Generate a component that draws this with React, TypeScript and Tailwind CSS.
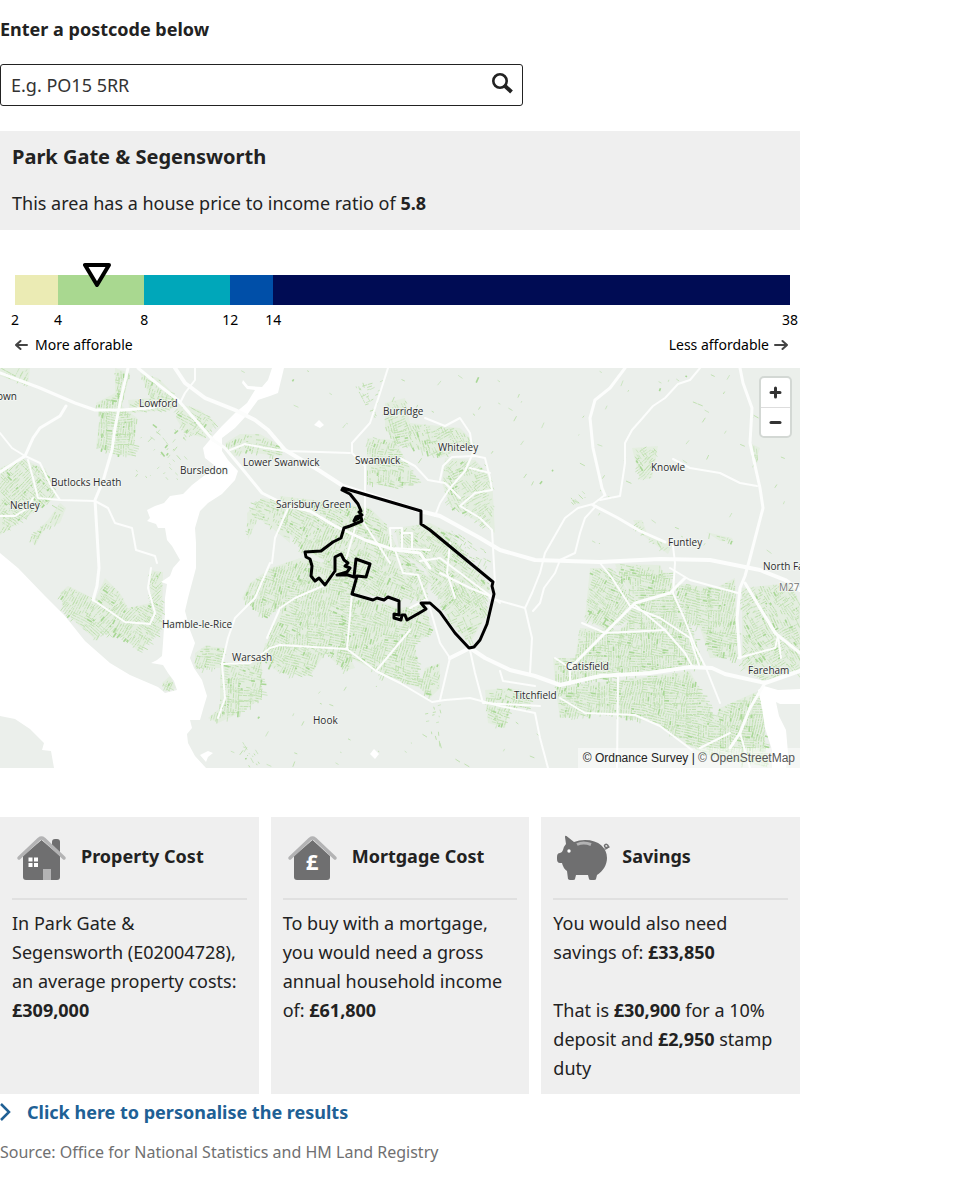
import type { ReactNode } from "react";

type Point = [number, number];

const bands = [
  { from: 2, className: "bg-[#ebebb4] grow-2" },
  { from: 4, className: "bg-[#a9d890] grow-4" },
  { from: 8, className: "bg-[#00a7ba] grow-4" },
  { from: 12, className: "bg-[#004fa8] grow-2" },
  { from: 14, className: "bg-[#000c54] grow-24" },
];
const tickGrow = ["grow-2", "grow-4", "grow-4", "grow-2", "grow-24"];
const SCALE_MIN = 2;
const SCALE_MAX = 38;

const water = [
  "M272 0 268 12 262 19 248 18 243 12 242 15 247 21 255 22 247 35 235 45 222 58 213 68 203 80 205 90 214 97 205 107 192 117 183 126 170 128 164 135 155 138 147 142 150 150 147 153 156 156 158 160 165 160 167 172 172 178 180 192 173 200 170 208 161 214 167 216 165 230 165 245 163 275 162 288 157 292 151 295 163 297 168 305 174 313 177 322 165 325 158 319 130 307 110 295 85 273 65 248 45 228 18 200 0 185 0 348 15 351 30 361 44 375 42 382 51 383 54 400 206 400 195 388 188 375 187 366 192 360 190 352 200 352 204 338 207 328 202 312 194 300 190 290 195 275 190 262 185 243 188 230 192 215 196 200 196 175 195 160 200 143 208 135 222 126 235 112 238 103 228 92 222 83 222 70 235 60 247 47 258 32 270 28 278 25 284 0Z",
  "M758 322 764 318 778 322 800 321 800 336 780 336 776 334 779 348 786 362 788 385 786 400 772 400 772 382 765 360 762 340Z",
  "M314 57 319 52 324 57 320 60Z",
  "M370 386 374 381 379 386 375 391Z",
  "M200 387 208 383 213 385 208 389 206 394Z",
];

const minorRoads = [
  "M0 65 12 80 25 88 40 95 52 120 60 132",
  "M28 92 33 110 38 130 60 132 95 133 108 140 115 155 132 160 136 182 155 188 157 195",
  "M151 200 148 220 155 245 150 256 125 254 105 240 93 232",
  "M0 148 15 148 28 140 33 130",
  "M195 0 195 12 185 25 180 35",
  "M230 82 245 76 265 80 285 83 320 84 350 85",
  "M388 0 380 25 370 55 352 75 352 85 365 98 365 145 362 152",
  "M400 90 415 98 428 112 445 115 460 130",
  "M425 50 445 58 460 50 470 65 473 85 465 103 450 120 440 135 435 148",
  "M440 112 443 98 452 89 475 88 485 90 490 110 492 122 475 125 460 138 480 150 492 162 495 215",
  "M470 100 490 105",
  "M700 0 690 12 678 16 665 30 653 38 640 53 632 62 625 75 625 95 620 128 600 132",
  "M596 138 585 150 580 165 575 185 560 192 555 205 544 220 540 235 533 243",
  "M673 91 690 100 720 105 740 115 757 118",
  "M605 127 593 136 578 140 565 150 545 185 540 205 532 225 525 240 532 270 530 305",
  "M267 270 280 240 295 230 325 217 335 205",
  "M222 296 250 295 270 280 280 277 347 281 376 303 400 315 432 334 445 332 470 330 500 338 535 345 540 370 548 400",
  "M352 225 347 281",
  "M376 303 410 262",
  "M390 160 391 180M390 160 402 160 402 180M402 165 412 165 412 180M391 180 430 182",
  "M395 182 403 205 418 207 430 240 440 275 450 290 440 332",
  "M410 240 425 232",
  "M470 282 475 305 483 335 540 338",
  "M500 303 503 313 535 318",
  "M490 230 525 240",
  "M420 193 440 190 500 235",
  "M440 205 470 220 490 228",
  "M600 195 612 210 630 238 660 250 690 270 700 300",
  "M673 225 684 250 695 278 706 300 720 335",
  "M582 255 605 265 665 262",
  "M635 237 665 262 685 285 692 298",
  "M560 330 585 345 635 347 660 358 692 382",
  "M618 308 617 400",
  "M555 290 570 300 570 316",
  "M670 200 690 212 738 225",
  "M745 215 760 240 778 268 781 290",
  "M738 290 775 280 778 268",
  "M673 178 675 195 673 225",
  "M740 365 750 400M700 380 730 365",
  "M270 195 255 230 235 250 228 270 222 296",
  "M222 296 225 330 218 350",
  "M288 140 275 170 272 195",
  "M355 160 345 195M362 152 390 195",
  "M450 175 447 205 455 230",
];

const majorRoads = [
  "M0 5 40 20 75 35 95 42 122 42 150 40 170 34",
  "M128 0 121 30 115 60 112 82 103 113 95 132 97 165 99 200 97 218 93 232",
  "M0 104 25 88 33 70 40 60 60 48 66 38",
  "M138 0 160 18 178 32 213 72",
  "M213 72 225 80 240 98 262 125 288 138 310 143 335 158 350 165 365 172 395 182 420 185 430 200",
  "M625 0 610 20 595 32 590 50 593 80 602 120 605 127",
  "M593 137 618 150 640 163 665 174",
  "M740 0 743 15 752 40 750 75 760 120 763 140 750 190 745 208 740 220 737 250 740 290",
  "M570 300 600 270 635 235 670 225 685 210",
  "M745 215 760 240 775 265 800 285",
  "M765 315 750 340 740 365 730 380",
];

const trunkRoads = [
  "M175 0 185 15 205 30 235 42 255 52 268 62 285 82 320 103 343 118 420 143 440 148 480 170 500 182 535 192 600 194 660 191 710 192 740 198 760 202 785 212 800 222",
  "M450 290 470 280 485 290 510 302 535 308 560 317 600 308 650 305 690 299 712 300 725 306 765 315 800 303",
];

const towns: { angle: number; density: number; shape: Point[] }[] = [
  { angle: 20, density: 0.75, shape: [[0, 0], [30, 0], [28, 18], [0, 8]] },
  { angle: 5, density: 1, shape: [[115, 0], [130, 5], [122, 38], [137, 50], [133, 88], [112, 86], [96, 78], [100, 50], [96, 35], [115, 25]] },
  { angle: 20, density: 0.8, shape: [[140, 5], [158, 10], [178, 30], [170, 42], [130, 45], [128, 32], [150, 30]] },
  { angle: 35, density: 0.7, shape: [[178, 35], [200, 42], [216, 55], [205, 70], [185, 65], [176, 50]] },
  { angle: 45, density: 0.1, shape: [[135, 55], [175, 50], [195, 80], [175, 115], [135, 110]] },
  { angle: 40, density: 0.85, shape: [[0, 100], [22, 90], [36, 97], [45, 100], [58, 128], [40, 140], [25, 150], [0, 167]] },
  { angle: 110, density: 0.6, shape: [[60, 135], [66, 140], [60, 155], [45, 160], [35, 178], [30, 170], [48, 152]] },
  { angle: 35, density: 0.9, shape: [[60, 225], [68, 218], [85, 226], [95, 232], [105, 210], [120, 225], [128, 240], [150, 235], [150, 202], [163, 204], [162, 260], [148, 275], [138, 283], [125, 270], [100, 265], [97, 273], [65, 245]] },
  { angle: 30, density: 0.8, shape: [[162, 315], [170, 308], [176, 320], [165, 323]] },
  { angle: 15, density: 0.6, shape: [[225, 75], [240, 66], [260, 66], [285, 80], [280, 88], [245, 84], [232, 90]] },
  { angle: 110, density: 0.6, shape: [[247, 145], [262, 130], [290, 135], [290, 175], [272, 160], [258, 150], [248, 172]] },
  { angle: 65, density: 0.4, shape: [[355, 15], [385, 10], [375, 50], [357, 25]] },
  { angle: 70, density: 0.8, shape: [[385, 35], [405, 30], [410, 55], [460, 60], [475, 75], [440, 90], [430, 85], [395, 75], [385, 60]] },
  { angle: 10, density: 0.75, shape: [[367, 70], [395, 72], [410, 100], [420, 115], [395, 120], [367, 115]] },
  { angle: 60, density: 0.65, shape: [[445, 90], [475, 92], [492, 110], [495, 165], [480, 155], [450, 138], [442, 115]] },
  { angle: 25, density: 0.8, shape: [[280, 128], [340, 135], [370, 140], [385, 155], [400, 185], [430, 210], [425, 232], [395, 230], [350, 225], [340, 200], [300, 180], [285, 160]] },
  { angle: 15, density: 0.9, shape: [[300, 190], [350, 200], [352, 225], [400, 240], [425, 235], [432, 265], [415, 275], [420, 320], [385, 308], [350, 290], [335, 283], [275, 278], [265, 285], [270, 262], [285, 235], [265, 250], [242, 230], [250, 215], [270, 200]] },
  { angle: 20, density: 0.85, shape: [[265, 275], [347, 283], [355, 300], [345, 303], [325, 285], [310, 308], [280, 305], [262, 292]] },
  { angle: 35, density: 0.75, shape: [[395, 160], [430, 155], [450, 165], [475, 200], [490, 218], [485, 235], [445, 235], [435, 225], [425, 200], [400, 185]] },
  { angle: 60, density: 0.7, shape: [[445, 215], [480, 215], [488, 245], [470, 275], [450, 255], [440, 235]] },
  { angle: 30, density: 0.4, shape: [[445, 160], [480, 175], [498, 200], [480, 200], [460, 185]] },
  { angle: 105, density: 0.7, shape: [[425, 300], [440, 295], [440, 320], [430, 330], [420, 320]] },
  { angle: 10, density: 0.8, shape: [[195, 285], [205, 278], [225, 280], [222, 294], [250, 295], [262, 290], [262, 330], [240, 345], [218, 355], [208, 350], [220, 340], [220, 300], [195, 300]] },
  { angle: 15, density: 0.9, shape: [[485, 322], [510, 320], [530, 325], [530, 340], [510, 340], [505, 360], [488, 355]] },
  { angle: 50, density: 0.75, shape: [[632, 80], [658, 78], [652, 110], [640, 112]] },
  { angle: 50, density: 0.5, shape: [[570, 130], [582, 122], [588, 128], [572, 140]] },
  { angle: 60, density: 0.7, shape: [[633, 152], [642, 152], [648, 168], [672, 178], [668, 186], [640, 165]] },
  { angle: 15, density: 0.7, shape: [[706, 164], [732, 170], [734, 174], [720, 173]] },
  { angle: 80, density: 0.7, shape: [[752, 76], [760, 80], [756, 92], [751, 88]] },
  { angle: 30, density: 1, shape: [[590, 200], [612, 200], [640, 240], [635, 250], [605, 262], [585, 250]] },
  { angle: 5, density: 1, shape: [[615, 200], [670, 205], [675, 226], [695, 270], [704, 298], [650, 304], [570, 316], [555, 312], [553, 290], [575, 290], [580, 260], [620, 262], [640, 240]] },
  { angle: 12, density: 1, shape: [[675, 215], [715, 220], [735, 210], [738, 290], [710, 290], [700, 260], [685, 250]] },
  { angle: 8, density: 1, shape: [[555, 318], [620, 312], [690, 303], [715, 350], [720, 340], [765, 320], [765, 370], [768, 400], [700, 385], [655, 355], [610, 345], [560, 350]] },
  { angle: 60, density: 0.8, shape: [[742, 220], [790, 215], [800, 235], [800, 305], [765, 312], [742, 300]] },
  { angle: 5, density: 0.7, shape: [[615, 196], [660, 197], [665, 210], [620, 208]] },
  { angle: 80, density: 0.15, shape: [[425, 345], [450, 320], [440, 380], [425, 375]] },
  { angle: 60, density: 0.35, shape: [[238, 370], [255, 378], [260, 400], [245, 400]] },
  { angle: 30, density: 0.008, shape: [[230, 0], [800, 0], [800, 190], [540, 190], [490, 130], [340, 110], [290, 60]] },
  { angle: 30, density: 0.008, shape: [[230, 310], [400, 318], [550, 350], [550, 400], [210, 400]] },
];

function inside([x, y]: Point, shape: Point[]) {
  let hit = false;
  for (let i = 0, j = shape.length - 1; i < shape.length; j = i++) {
    const [xi, yi] = shape[i];
    const [xj, yj] = shape[j];
    if (yi > y !== yj > y && x < ((xj - xi) * (y - yi)) / (yj - yi) + xi) hit = !hit;
  }
  return hit;
}

/** Scatters short rows of houses over each town, block by block. */
function drawHouses() {
  let seed = 7;
  const random = () => {
    seed = (seed * 16807) % 2147483647;
    return seed / 2147483647;
  };
  const layers = ["", "", ""];
  for (const { angle, density, shape } of towns) {
    const xs = shape.map((p) => p[0]);
    const ys = shape.map((p) => p[1]);
    const block = 11;
    for (let bx = Math.min(...xs); bx < Math.max(...xs); bx += block) {
      for (let by = Math.min(...ys); by < Math.max(...ys); by += block) {
        const turn = ((angle + (random() > 0.5 ? 90 : 0) + random() * 20 - 10) * Math.PI) / 180;
        const c = Math.cos(turn);
        const s = Math.sin(turn);
        for (let v = -5; v < 6; v += 2.5) {
          for (let u = -6; u < 6; ) {
            const length = 1 + random() * 5;
            const x = bx + block / 2 + u * c - v * s;
            const y = by + block / 2 + u * s + v * c;
            if (random() < density * 0.92 && inside([x, y], shape)) {
              const layer = random() > 0.95 ? 2 : random() > 0.45 ? 1 : 0;
              layers[layer] += `M${x.toFixed(1)} ${y.toFixed(1)}l${(c * length).toFixed(1)} ${(s * length).toFixed(1)}`;
            }
            u += length + 0.8;
          }
        }
      }
    }
  }
  return layers;
}

const houses = drawHouses();
const builtUp = towns.filter((town) => town.density >= 0.6);

const boundary =
  "M343 120 421 143 421 156 430 162 493 214 492 218 494 226 487 256 480 272 474 279 469 280 455 265 440 244 430 235 421 235 426 241 421 244 407 252 405 247 402 247 401 252 394 250 394 246 399 247 399 233 388 229 384 232 377 230 373 232 352 226 354 219 357 208 366 209 370 196 356 191 354 209 348 207 337 207 347 204 350 200 345 198 348 195 344 192 341 186 335 189 335 203 325 217 319 210 315 213 311 208 312 198 310 191 306 189 305 184 321 183 333 174 341 170 344 160 350 158 362 153 361 149 354 153 356 149 362 147 359 144 361 143 358 136 350 126 342 122Z";

const places: [string, number, number][] = [
  ["own", -3, 32], ["Lowford", 139, 39], ["Burridge", 383, 47], ["Whiteley", 438, 83],
  ["Lower Swanwick", 243, 98], ["Swanwick", 355, 96], ["Bursledon", 180, 106],
  ["Butlocks Heath", 51, 118], ["Sarisbury Green", 276, 140], ["Netley", 10, 141],
  ["Knowle", 651, 103], ["Funtley", 668, 178], ["North Fareham", 763, 202],
  ["Hamble-le-Rice", 162, 260], ["Warsash", 232, 293], ["Hook", 313, 356],
  ["Catisfield", 566, 302], ["Titchfield", 514, 331], ["Fareham", 748, 306],
];

function MapView() {
  return (
    <svg viewBox="0 0 800 400" preserveAspectRatio="xMidYMid slice" className="block h-full w-full" role="img" aria-label="Map of Park Gate and Segensworth">
      <rect width="800" height="400" fill="#ebefeb" />
      <g fill="#e4eee0">
        {builtUp.map(({ shape }) => <polygon key={shape.join(" ")} points={shape.join(" ")} />)}
      </g>
      <g fill="none">
        <path d={houses[0]} stroke="#cde6c3" strokeWidth="1" />
        <path d={houses[1]} stroke="#bcdfac" strokeWidth="0.900" />
        <path d={houses[2]} stroke="#a9d796" strokeWidth="1.600" />
      </g>
      <g fill="#fff">
        {water.map((d) => <path key={d} d={d} />)}
      </g>
      <g fill="none" stroke="#fcfdfc" strokeLinejoin="round" strokeLinecap="round">
        {minorRoads.map((d) => <path key={d} d={d} strokeWidth="2" />)}
        {majorRoads.map((d) => <path key={d} d={d} strokeWidth="3" />)}
        {trunkRoads.map((d) => <path key={d} d={d} strokeWidth="4" />)}
      </g>
      <path d={boundary} fill="none" stroke="#000" strokeWidth="3" strokeLinejoin="round" />
      <g className="font-['Open_Sans',sans-serif] text-[10px] font-medium" fill="#2b2b2b" stroke="#f4f7f4" strokeWidth="1.500" paintOrder="stroke">
        {places.map(([name, x, y]) => <text key={name} x={x} y={y}>{name}</text>)}
        <text x="779" y="223" fill="#777">M27</text>
      </g>
    </svg>
  );
}

function Card({ icon, title, children }: { icon: ReactNode; title: string; children: ReactNode }) {
  return (
    <section className="bg-[#efefef] px-3 pb-[11px]">
      <div className="flex h-[83px] items-center border-b-2 border-[#e0e0e0]">
        <div className="w-[69px] shrink-0 pl-1">{icon}</div>
        <h2 className="pb-1 text-lg font-bold">{title}</h2>
      </div>
      <div className="pt-[9px] text-lg leading-[29px]">{children}</div>
    </section>
  );
}

function PropertyIcon() {
  return (
    <svg width="52" height="48" viewBox="0 0 52 48" aria-hidden="true">
      <path d="M36 8q0-3 3-3h2q3 0 3 3v13l-8-8Z" fill="#6f6f70" />
      <path d="M7 22 25.500 6 44 22v21q0 3-3 3H10q-3 0-3-3Z" fill="#6f6f70" />
      <path d="M3 24 23 5q2.500-2 5 0l20 19" fill="none" stroke="#b3b3b4" strokeWidth="3.500" strokeLinecap="round" />
      <path d="M12.500 23.500h4v4h-4zM18 23.500h4v4h-4zM12.500 29h4v4h-4zM18 29h4v4h-4z" fill="#fff" />
      <path d="M27 35h8v11h-8z" fill="#b3b3b4" />
    </svg>
  );
}

function MortgageIcon() {
  return (
    <svg width="52" height="48" viewBox="0 0 52 48" aria-hidden="true">
      <path d="M7 22 25.500 6 43 22v21q0 3-3 3H10q-3 0-3-3Z" fill="#6f6f70" />
      <path d="M3 24 23 5q2.500-2 5 0l20 19" fill="none" stroke="#b3b3b4" strokeWidth="3.500" strokeLinecap="round" />
      <text x="25" y="36" textAnchor="middle" fill="#fff" className="text-[22px] font-bold">£</text>
    </svg>
  );
}

function SavingsIcon() {
  return (
    <svg width="54" height="48" viewBox="0 0 54 48" aria-hidden="true">
      <path d="M8 3q0-2 1.500-1l7.500 6q5-2 11-2c14 0 22 8 22 18 0 7-4 13-10 17l-1 4q0 1-2 1h-3q-2 0-2-1l-1-4h-12l-1 4q0 1-2 1h-3q-1 0-2-1l-1-8q-4-3-5-8H3q-3 0-3-4v-2q0-4 3-4 2 0 3-3 1-4 3-6Z" fill="#6f6f70" />
      <path d="M20 10.500q6.500-3 14 0" fill="none" stroke="#b3b3b4" strokeWidth="3" />
      <circle cx="12" cy="17" r="1.700" fill="#fff" />
      <path d="M48 15q4-1 3-3.500-2-2.500-3.500 0 0 3 4.500 1.500" fill="none" stroke="#6f6f70" strokeWidth="1.500" strokeLinecap="round" />
    </svg>
  );
}

function Arrow({ back = false }: { back?: boolean }) {
  return (
    <svg width="14" height="12" viewBox="0 0 14 12" fill="none" stroke="#444" strokeWidth="2" strokeLinecap="round" strokeLinejoin="round" aria-hidden="true">
      <path d={back ? "M12 6H1M5.500 2 1 6l4.500 4" : "M1 6h12M8.500 2 13 6l-4.500 4"} />
    </svg>
  );
}

export default function App() {
  const ratio = 5.8;
  const markerLeft = `${((ratio - SCALE_MIN) / (SCALE_MAX - SCALE_MIN)) * 100}%`;

  return (
    <main className="max-w-[800px] font-['Noto_Sans',sans-serif] text-lg text-[#222]">
      <form onSubmit={(event) => event.preventDefault()}>
        <label htmlFor="postcode" className="block pt-[15px] text-lg font-bold">Enter a postcode below</label>
        <div className="mt-[21px] flex h-[42px] w-full max-w-[523px] items-center rounded-[3px] border border-[#222]">
          <input id="postcode" type="text" placeholder="E.g. PO15 5RR" className="h-full min-w-0 grow bg-transparent px-[10px] text-lg outline-none placeholder:text-[#333]" />
          <button type="submit" aria-label="Search" className="mr-[9px] mb-1">
            <svg width="22" height="22" viewBox="0 0 22 22" fill="none" stroke="#222" aria-hidden="true">
              <circle cx="9" cy="9" r="6.700" strokeWidth="2.600" />
              <path d="m13.500 13.500 7 6.500" strokeWidth="4" />
            </svg>
          </button>
        </div>
      </form>

      <section className="mt-[25px] bg-[#efefef] px-3 pt-3 pb-3">
        <h1 className="text-xl font-bold">Park Gate &amp; Segensworth</h1>
        <p className="mt-[18px] leading-[29px]">
          This area has a house price to income ratio of <strong>5.8</strong>
        </p>
      </section>

      <section className="mt-[45px] pr-[10px] pl-[15px] text-sm text-black" aria-label="Affordability scale">
        <div className="relative flex h-[30px]">
          {bands.map((band) => <div key={band.from} className={`basis-0 ${band.className}`} />)}
          <div className="absolute -top-3 -translate-x-1/2" style={{ left: markerLeft }}>
            <svg width="28" height="24" viewBox="0 0 28 24" className="block" aria-hidden="true">
              <path d="M2 2h24L14 22Z" fill="#fff" stroke="#000" strokeWidth="4" strokeLinejoin="round" />
            </svg>
          </div>
        </div>
        <div className="mt-[5px] flex">
          {bands.map((band, index) => (
            <div key={band.from} className={`w-0 basis-0 ${tickGrow[index]}`}>
              <span className="inline-block -translate-x-1/2">{band.from}</span>
            </div>
          ))}
          <div className="w-0"><span className="inline-block -translate-x-1/2">{SCALE_MAX}</span></div>
        </div>
        <div className="mt-[5px] flex justify-between pr-[2px]">
          <span className="flex items-center gap-[6px]"><Arrow back />More afforable</span>
          <span className="flex items-center gap-[5px]">Less affordable<Arrow /></span>
        </div>
      </section>

      <section className="relative mt-[13px] h-[400px] overflow-hidden">
        <MapView />
        <div className="absolute top-2 right-2 flex flex-col overflow-hidden rounded-[5px] border-2 border-[#d3d8d4] bg-white">
          <button type="button" aria-label="Zoom in" className="flex h-[29px] w-[29px] items-center justify-center">
            <svg width="13" height="13" viewBox="0 0 13 13" stroke="#333" strokeWidth="3" strokeLinecap="round" aria-hidden="true"><path d="M2 6.500h9M6.500 2v9" /></svg>
          </button>
          <button type="button" aria-label="Zoom out" className="flex h-[29px] w-[29px] items-center justify-center border-t border-[#ddd]">
            <svg width="13" height="13" viewBox="0 0 13 13" stroke="#333" strokeWidth="3" strokeLinecap="round" aria-hidden="true"><path d="M2 6.500h9" /></svg>
          </button>
        </div>
        <div className="absolute right-0 bottom-0 bg-white/50 px-[5px] font-['Liberation_Sans',sans-serif] text-xs leading-5 text-[#222]">
          <a href="#ordnance-survey">© Ordnance Survey</a> | <a href="#openstreetmap" className="text-[#555]">© OpenStreetMap</a>
        </div>
      </section>

      <div className="mt-[49px] grid grid-cols-3 gap-3">
        <Card icon={<PropertyIcon />} title="Property Cost">
          <p>In Park Gate &amp; Segensworth (E02004728), an average property costs: <strong>£309,000</strong></p>
        </Card>
        <Card icon={<MortgageIcon />} title="Mortgage Cost">
          <p>To buy with a mortgage, you would need a gross annual household income of: <strong>£61,800</strong></p>
        </Card>
        <Card icon={<SavingsIcon />} title="Savings">
          <p>You would also need savings of: <strong>£33,850</strong></p>
          <p className="mt-[29px]">That is <strong>£30,900</strong> for a 10% deposit and <strong>£2,950</strong> stamp duty</p>
        </Card>
      </div>

      <a href="#personalise" className="mt-1 flex items-center gap-4 font-bold text-[#206095]">
        <svg width="11" height="20" viewBox="0 0 11 20" fill="none" stroke="currentColor" strokeWidth="2.500" aria-hidden="true"><path d="m1 2 8 8-8 8" /></svg>
        Click here to personalise the results
      </a>
      <p className="mt-[14px] text-base text-[#707071]">Source: Office for National Statistics and HM Land Registry</p>
    </main>
  );
}
